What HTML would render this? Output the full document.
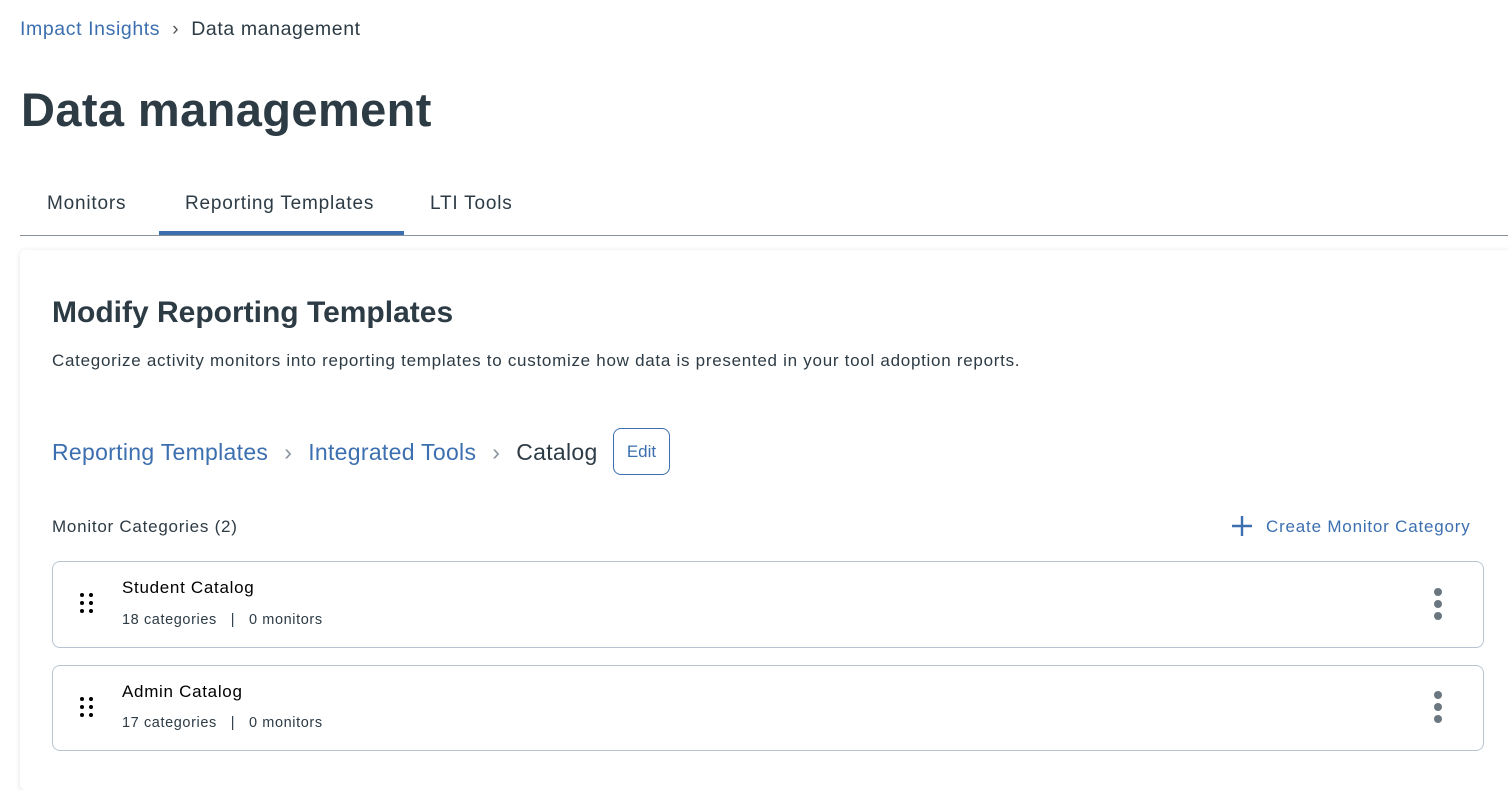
<!DOCTYPE html>
<html><head><meta charset="utf-8"><style>
*{margin:0;padding:0;box-sizing:border-box}
body{width:1508px;height:774px;overflow:hidden;background:#fff;font-family:"Liberation Sans",sans-serif;color:#2d3b45;position:relative}
.a{position:absolute;white-space:nowrap}
.blue{color:#3c6fb0}
</style></head><body>
<div class="a" style="left:20px;top:18px;font-size:19.5px;letter-spacing:0.6px"><span class="blue">Impact Insights</span><span style="color:#555;margin:0 12px">&#x203A;</span><span style="color:#2d3b45">Data management</span></div>
<div class="a" style="left:21px;top:82px;font-size:47px;font-weight:bold;color:#2d3b45;letter-spacing:0.4px">Data management</div>
<div class="a" style="left:47px;top:193px;font-size:19px;letter-spacing:0.8px">Monitors</div>
<div class="a" style="left:185px;top:193px;font-size:19px;letter-spacing:0.8px">Reporting Templates</div>
<div class="a" style="left:430px;top:193px;font-size:19px;letter-spacing:0.8px">LTI Tools</div>
<div class="a" style="left:20px;top:235px;width:1488px;height:1px;background:#8a939b"></div>
<div class="a" style="left:159px;top:231px;width:245px;height:4px;background:#3c6fb0"></div>
<div class="a" style="left:20px;top:250px;width:1500px;height:540px;background:#fff;box-shadow:0 1px 6px rgba(0,0,0,0.12);border-radius:6px"></div>
<div class="a" style="left:52px;top:296px;font-size:30px;font-weight:bold">Modify Reporting Templates</div>
<div class="a" style="left:52px;top:351px;font-size:17px;letter-spacing:0.72px">Categorize activity monitors into reporting templates to customize how data is presented in your tool adoption reports.</div>
<div class="a" style="left:52px;top:439px;font-size:23px;letter-spacing:0.3px"><span class="blue">Reporting Templates</span><span style="color:#8a939b;margin:0 16px">&#x203A;</span><span class="blue">Integrated Tools</span><span style="color:#8a939b;margin:0 16px">&#x203A;</span><span>Catalog</span></div>
<div class="a" style="left:613px;top:428px;width:57px;height:47px;border:1px solid #3c6fb0;border-radius:8px;color:#3c6fb0;font-size:17px;text-align:center;line-height:45px">Edit</div>
<div class="a" style="left:52px;top:517px;font-size:17px;letter-spacing:0.75px">Monitor Categories (2)</div>
<svg class="a" style="left:1231px;top:515px" width="22" height="22"><path d="M11 1v20M1 11h20" stroke="#3c6fb0" stroke-width="2.4"/></svg>
<div class="a blue" style="left:1266px;top:517px;font-size:17px;letter-spacing:0.8px">Create Monitor Category</div>

<div class="a" style="left:52px;top:561px;width:1432px;height:87px;border:1px solid #b8c4d4;border-radius:8px"></div>
<div class="a" style="left:52px;top:665px;width:1432px;height:86px;border:1px solid #b8c4d4;border-radius:8px"></div>

<svg class="a" style="left:78px;top:592px" width="20" height="22"><g fill="#000"><circle cx="4" cy="3" r="2"/><circle cx="13" cy="3" r="2"/><circle cx="4" cy="11" r="2"/><circle cx="13" cy="11" r="2"/><circle cx="4" cy="19" r="2"/><circle cx="13" cy="19" r="2"/></g></svg>
<svg class="a" style="left:78px;top:696px" width="20" height="22"><g fill="#000"><circle cx="4" cy="3" r="2"/><circle cx="13" cy="3" r="2"/><circle cx="4" cy="11" r="2"/><circle cx="13" cy="11" r="2"/><circle cx="4" cy="19" r="2"/><circle cx="13" cy="19" r="2"/></g></svg>

<div class="a" style="left:122px;top:578px;font-size:17px;color:#000;letter-spacing:0.7px">Student Catalog</div>
<div class="a" style="left:122px;top:612px;font-size:14.5px;color:#2d3b45;letter-spacing:0.6px">18 categories &nbsp;&nbsp;| &nbsp;&nbsp;0 monitors</div>
<div class="a" style="left:122px;top:682px;font-size:17px;color:#000;letter-spacing:0.7px">Admin Catalog</div>
<div class="a" style="left:122px;top:715px;font-size:14.5px;color:#2d3b45;letter-spacing:0.6px">17 categories &nbsp;&nbsp;| &nbsp;&nbsp;0 monitors</div>

<svg class="a" style="left:1432px;top:587px" width="12" height="34"><g fill="#6b7780"><circle cx="6" cy="5" r="4"/><circle cx="6" cy="17" r="4"/><circle cx="6" cy="29" r="4"/></g></svg>
<svg class="a" style="left:1432px;top:690px" width="12" height="34"><g fill="#6b7780"><circle cx="6" cy="5" r="4"/><circle cx="6" cy="17" r="4"/><circle cx="6" cy="29" r="4"/></g></svg>
</body></html>
